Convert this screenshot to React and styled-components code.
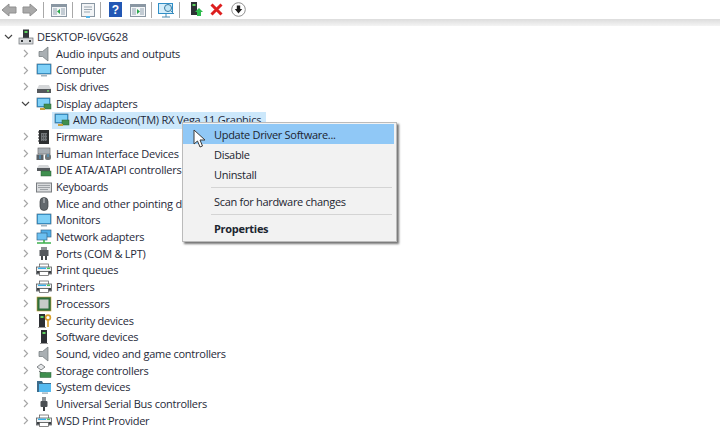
import React from "react";
import styled, { createGlobalStyle } from "styled-components";

const Global = createGlobalStyle`
  html, body { margin: 0; padding: 0; background: #fff; }
  body { font-family: "Open Sans", "Noto Sans", "Liberation Sans", sans-serif; }
`;

const Page = styled.div`
  position: relative;
  width: 720px;
  height: 432px;
  overflow: hidden;
  background: #fff;
  color: #1f2a3a;
`;

const Toolbar = styled.div`
  display: flex;
  align-items: center;
  height: 19px;
  padding-left: 1px;
  background: #fff;
`;

const ToolIcon = styled.svg`
  display: block;
  flex: none;
  margin-left: ${(p) => p.$gap || 0}px;
`;

const Sep = styled.div`
  flex: none;
  width: 1px;
  height: 16px;
  background: #a8a8a8;
  margin-left: ${(p) => p.$gap}px;
`;

const Band = styled.div`
  height: 7px;
  background: linear-gradient(#dcdcdc, #f4f4f4);
`;

const Tree = styled.div`
  display: grid;
  grid-auto-rows: 16.7px;
  padding-top: 2.5px;
`;

const Row = styled.div`
  display: flex;
  align-items: center;
  padding-left: ${(p) => p.$indent}px;
`;

const Chevron = styled.svg`
  flex: none;
  width: 9px;
  height: 9px;
  margin-right: ${(p) => p.$space}px;
`;

const Label = styled.span`
  font-size: 11px;
  line-height: 16px;
  letter-spacing: -0.25px;
  margin-left: ${(p) => p.$space || 4}px;
  white-space: nowrap;
`;

const DeviceIcon = styled.svg`
  flex: none;
  width: 16px;
  height: 16px;
`;

const Selected = styled.div`
  display: flex;
  align-items: center;
  height: 16.7px;
  padding: 0 5px 0 2px;
  background: #cce8fb;
`;

const Menu = styled.div`
  position: absolute;
  left: 182px;
  top: 122px;
  width: 215px;
  height: 120px;
  box-sizing: border-box;
  padding: 1px 2px 1px 0;
  background: #f2f2f2;
  border: 1px solid #bbb;
  box-shadow: 2px 2px 2px rgba(70, 70, 70, 0.75);
  font-size: 11px;
  letter-spacing: -0.3px;
  color: #1c2530;
`;

const MenuItem = styled.div`
  height: 20px;
  padding-left: 31px;
  display: flex;
  align-items: center;
  font-weight: ${(p) => (p.$bold ? 700 : 400)};
  background: ${(p) => (p.$active ? "#90c8f6" : "transparent")};
`;

const MenuSep = styled.div`
  height: 1px;
  margin: 3px 2px 3px 28px;
  background: #d4d4d4;
`;

const Cursor = styled.svg`
  position: absolute;
  left: 193px;
  top: 129px;
`;

const Arrow = ({ flip, gap }) => (
  <ToolIcon $gap={gap} width="16" height="14" viewBox="0 0 16 14">
    <path
      d={flip ? "M15 7 8 1v3H1v6h7v3z" : "M1 7l7-6v3h7v6H8v3z"}
      fill="#a9a9a9"
      stroke="#8f8f8f"
    />
  </ToolIcon>
);

const WinIcon = ({ gap, green }) => (
  <ToolIcon $gap={gap} width="16" height="14" viewBox="0 0 16 14">
    <rect x="0.5" y="1.5" width="15" height="12" fill="#f4f6f8" stroke="#8a97a3" />
    <rect x="0.5" y="1.5" width="15" height="2.5" fill="#8a97a3" />
    <rect x="2" y="5" width="4" height="7" fill="#c3ccd4" />
    <rect x="10" y="5" width="4" height="7" fill="#c3ccd4" />
    <path d={green ? "M7 6l3 2.5L7 11z" : "M9 6 6 8.5 9 11z"} fill="#2aa84a" />
  </ToolIcon>
);

const Monitor = () => (
  <>
    <rect x="1" y="2" width="14" height="10" fill="#2f9fe0" stroke="#4a6b80" strokeWidth=".7" />
    <rect x="2" y="3" width="12" height="8" fill="#7fd0f7" />
    <rect x="5" y="13" width="6" height="1.5" fill="#9fb2bf" />
  </>
);

const Card = () => (
  <>
    <rect x="1" y="2" width="13" height="9" fill="#2f9fe0" stroke="#4a6b80" strokeWidth=".7" />
    <rect x="2" y="3" width="11" height="7" fill="#7fd0f7" />
    <rect x="8" y="8" width="7" height="5" fill="#3f8f4f" stroke="#2c5f38" strokeWidth=".5" />
    <rect x="4" y="12" width="5" height="2" fill="#c9a13c" />
  </>
);

const Tower = ({ x = 5 }) => (
  <>
    <rect x={x} y="1" width="6" height="13" fill="#2c2f33" />
    <rect x={x + 1.5} y="3" width="3" height="2" fill="#5fd35f" />
    <rect x={x - 1} y="14" width="8" height="1" fill="#9a9a9a" />
  </>
);

const Printer = () => (
  <>
    <rect x="3.5" y="2" width="9" height="3.5" fill="#fff" stroke="#555" strokeWidth=".7" />
    <rect x="0.5" y="5" width="15" height="7" fill="#f0f1f2" stroke="#55595d" strokeWidth=".8" />
    <rect x="2" y="5.6" width="8" height="1.4" fill="#39b0e8" />
    <rect x="11" y="5.6" width="3" height="1.4" fill="#49c45f" />
    <rect x="1" y="9" width="14" height="2.6" fill="#3c4044" />
    <rect x="3.5" y="9.5" width="9" height="4" fill="#fff" stroke="#555" strokeWidth=".7" />
  </>
);

const Speaker = () => (
  <path d="M3 5.5h3.5L12 1v14l-5.5-4.5H3z" fill="#a9afb3" stroke="#6f7579" strokeWidth=".7" />
);

const Plug = () => (
  <>
    <rect x="6" y="1" width="4" height="4" fill="#8c9094" />
    <rect x="4.5" y="5" width="7" height="6" rx="1" fill="#4c5054" />
    <rect x="7" y="11" width="2" height="4" fill="#3a3d40" />
  </>
);

const icons = {
  computer: (
    <>
      <rect x="5" y="0.5" width="6" height="9" fill="#33373b" />
      <rect x="6.5" y="2" width="3" height="2" fill="#5fd35f" />
      <rect x="1" y="9" width="14" height="6" fill="#d8dadc" stroke="#6d7176" strokeWidth=".7" />
      <rect x="3" y="11" width="2" height="2" fill="#33373b" />
      <rect x="11" y="11" width="2" height="2" fill="#33373b" />
    </>
  ),
  speaker: <Speaker />,
  monitor: <Monitor />,
  disk: (
    <>
      <path d="M3 6h10l2 4H1z" fill="#d5d7d9" />
      <rect x="1" y="10" width="14" height="4" fill="#55595d" />
      <rect x="11" y="11.2" width="2" height="1.4" fill="#6fe06f" />
    </>
  ),
  card: <Card />,
  firmware: (
    <>
      <rect x="3" y="1" width="10" height="14" fill="#2d2f31" />
      <rect x="5" y="4" width="6" height="8" fill="#707478" />
      <path d="M2 3h12M2 6h12M2 9h12M2 12h12" stroke="#2d2f31" strokeDasharray="1 1" />
    </>
  ),
  hid: (
    <>
      <rect x="2" y="2" width="12" height="6" fill="#b4bac0" stroke="#555" strokeWidth=".6" />
      <path d="M3.5 4h9M3.5 6h9" stroke="#7f868c" strokeDasharray="1 1" />
      <rect x="0.5" y="8.5" width="7" height="5.5" fill="#5b6166" />
      <rect x="9" y="8" width="6" height="6" rx="2" fill="#707679" />
      <path d="M4 9v4M12 8v3" stroke="#4aa8e0" />
    </>
  ),
  ide: (
    <>
      <path d="M3 3h9l2 3H1z" fill="#d5d7d9" />
      <rect x="1" y="6" width="13" height="3" fill="#55595d" />
      <rect x="5" y="9" width="10" height="5" fill="#3f8f4f" stroke="#2c5f38" strokeWidth=".5" />
    </>
  ),
  keyboard: (
    <>
      <rect x="0.5" y="4" width="15" height="9" fill="#d9dbdd" stroke="#787c80" />
      <path d="M2 6.5h12M2 8.5h12M4 10.5h8" stroke="#9ea2a6" />
    </>
  ),
  mouse: (
    <>
      <rect x="4" y="1.5" width="8" height="13" rx="4" fill="#62686d" stroke="#3c4044" strokeWidth=".7" />
      <path d="M8 2v5" stroke="#cdd0d3" />
    </>
  ),
  network: (
    <>
      <rect x="5" y="1" width="10" height="7" fill="#50aee8" stroke="#37688a" strokeWidth=".7" />
      <rect x="1" y="4" width="10" height="7" fill="#6cc0f1" stroke="#37688a" strokeWidth=".7" />
      <path d="M1 14h14M8 11v3" stroke="#3fb04f" strokeWidth="1.6" />
    </>
  ),
  port: (
    <>
      <rect x="5" y="1" width="6" height="3" fill="#8c9094" />
      <rect x="3.5" y="4" width="9" height="6" fill="#55595d" />
      <rect x="5" y="10" width="2" height="4" fill="#45494c" />
      <rect x="9" y="10" width="2" height="4" fill="#45494c" />
    </>
  ),
  printer: <Printer />,
  processor: (
    <>
      <rect x="1" y="1" width="14" height="14" fill="#2f6f3c" stroke="#c9a13c" strokeWidth=".6" />
      <rect x="3.5" y="3.5" width="9" height="9" fill="#c6cbc8" />
    </>
  ),
  security: (
    <>
      <Tower x={3} />
      <circle cx="12" cy="4.5" r="2.4" fill="none" stroke="#d9a02c" strokeWidth="1.6" />
      <path d="M12 7v7" stroke="#d9a02c" strokeWidth="1.6" />
    </>
  ),
  tower: <Tower />,
  storage: (
    <>
      <path d="M5 1l4 3-4 3-4-3z" fill="#e4e6e8" stroke="#55595d" strokeWidth=".7" />
      <path d="M3 8l3 2h4" fill="none" stroke="#55595d" />
      <rect x="4" y="9.5" width="11" height="5" fill="#3f8f4f" stroke="#2c5f38" strokeWidth=".5" />
    </>
  ),
  system: (
    <>
      <path d="M1 2h5l1 2h8v9H1z" fill="#3c6c8c" />
      <rect x="3" y="5" width="12" height="8" fill="#55baf0" />
      <rect x="6" y="13.5" width="6" height="1.2" fill="#8ea2ae" />
    </>
  ),
  usb: <Plug />,
};

const devices = [
  ["Audio inputs and outputs", "speaker"],
  ["Computer", "monitor"],
  ["Disk drives", "disk"],
  ["Display adapters", "card", "open"],
  ["AMD Radeon(TM) RX Vega 11 Graphics", "card", "child"],
  ["Firmware", "firmware"],
  ["Human Interface Devices", "hid"],
  ["IDE ATA/ATAPI controllers", "ide"],
  ["Keyboards", "keyboard"],
  ["Mice and other pointing devices", "mouse"],
  ["Monitors", "monitor"],
  ["Network adapters", "network"],
  ["Ports (COM & LPT)", "port"],
  ["Print queues", "printer"],
  ["Printers", "printer"],
  ["Processors", "processor"],
  ["Security devices", "security"],
  ["Software devices", "tower"],
  ["Sound, video and game controllers", "speaker"],
  ["Storage controllers", "storage"],
  ["System devices", "system"],
  ["Universal Serial Bus controllers", "usb"],
  ["WSD Print Provider", "printer"],
];

const Chev = ({ open, space }) => (
  <Chevron $space={space} viewBox="0 0 9 9">
    <path
      d={open ? "M1 3l3.5 3.5L8 3" : "M3 1l3.5 3.5L3 8"}
      fill="none"
      stroke={open ? "#444" : "#a6a6a6"}
      strokeWidth="1.2"
    />
  </Chevron>
);

const Device = ({ name }) => <DeviceIcon viewBox="0 0 16 16">{icons[name]}</DeviceIcon>;

export default function App() {
  return (
    <Page>
      <Global />
      <Toolbar>
        <Arrow />
        <Arrow flip gap={5} />
        <Sep $gap={5} />
        <WinIcon gap={7} />
        <Sep $gap={5} />
        <ToolIcon $gap={7} width="16" height="16" viewBox="0 0 16 16">
          <rect x="1.5" y="1.5" width="13" height="13" fill="#f2f4f6" stroke="#8a97a3" />
          <path d="M4 5h8M4 7.5h8M4 10h6" stroke="#9aa6b0" />
          <rect x="6" y="14" width="4" height="2" fill="#53b4ea" />
        </ToolIcon>
        <Sep $gap={4} />
        <ToolIcon $gap={8} width="13" height="15" viewBox="0 0 13 15">
          <rect width="13" height="15" fill="#2257b4" />
          <text x="6.5" y="12" textAnchor="middle" fontSize="12" fontWeight="700" fill="#fff" fontFamily="Liberation Sans, sans-serif">?</text>
        </ToolIcon>
        <WinIcon gap={8} green />
        <Sep $gap={5} />
        <ToolIcon $gap={6} width="17" height="16" viewBox="0 0 17 16">
          <rect x="0.5" y="1.5" width="14" height="10" fill="#d5eefb" stroke="#2f8fc8" />
          <circle cx="10" cy="6" r="3.5" fill="#bfe6f7" stroke="#3d7a9e" />
          <path d="M4 15h8M8 12v3M13 9l3 3" stroke="#4a8bb0" />
        </ToolIcon>
        <Sep $gap={4} />
        <ToolIcon $gap={10} width="14" height="15" viewBox="0 0 14 15">
          <rect x="1" y="0" width="6" height="13" fill="#2d3135" />
          <rect x="2.5" y="2" width="3" height="2" fill="#5fd35f" />
          <path d="M9 6l4 4h-2v4H7v-4H5z" fill="#2dbb4c" />
        </ToolIcon>
        <ToolIcon $gap={6} width="13" height="13" viewBox="0 0 13 13">
          <path d="M1.5 1.5l10 10M11.5 1.5l-10 10" stroke="#dd1f1f" strokeWidth="3" />
        </ToolIcon>
        <ToolIcon $gap={8} width="15" height="15" viewBox="0 0 15 15">
          <circle cx="7.5" cy="7.5" r="6.8" fill="#fff" stroke="#8f8f8f" />
          <path d="M5.8 3.5h3.4v3.5h2L7.5 11.5 3.8 7h2z" fill="#1c1c1c" />
        </ToolIcon>
      </Toolbar>
      <Band />
      <Tree>
        <Row $indent={4}>
          <Chev open space={5} />
          <Device name="computer" />
          <Label $space={3}>DESKTOP-I6VG628</Label>
        </Row>
        {devices.map(([label, icon, kind]) =>
          kind === "child" ? (
            <Row key={label} $indent={52}>
              <Selected>
                <Device name={icon} />
                <Label $space={3}>{label}</Label>
              </Selected>
            </Row>
          ) : (
            <Row key={label} $indent={21}>
              <Chev open={kind === "open"} space={6} />
              <Device name={icon} />
              <Label>{label}</Label>
            </Row>
          )
        )}
      </Tree>
      <Menu>
        <MenuItem $active>Update Driver Software...</MenuItem>
        <MenuItem>Disable</MenuItem>
        <MenuItem>Uninstall</MenuItem>
        <MenuSep />
        <MenuItem>Scan for hardware changes</MenuItem>
        <MenuSep />
        <MenuItem $bold>Properties</MenuItem>
      </Menu>
      <Cursor width="14" height="20" viewBox="0 0 14 20">
        <path d="M1 1v14l3.5-3 2.5 6 2.5-1-2.5-6H12z" fill="#fff" stroke="#3a3a3a" strokeWidth="1" />
      </Cursor>
    </Page>
  );
}
